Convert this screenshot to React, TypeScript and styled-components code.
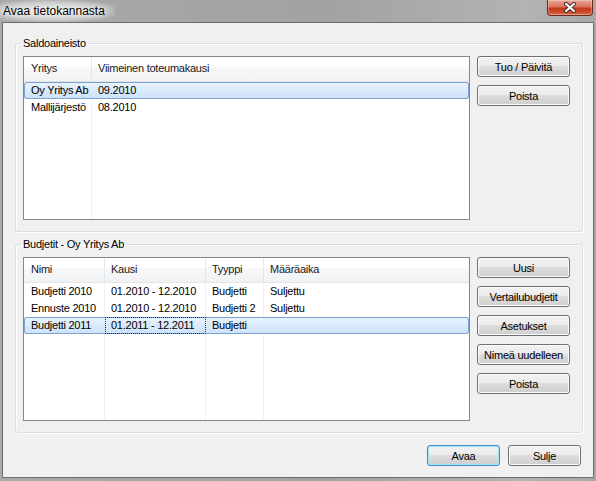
import React from 'react';
import styled, { createGlobalStyle } from 'styled-components';

const GlobalStyle = createGlobalStyle`
  html, body {
    margin: 0;
    padding: 0;
  }
  body {
    font-family: "Liberation Sans", Arial, sans-serif;
    font-size: 11px;
    font-weight: 400;
    letter-spacing: -0.25px;
    color: #000;
  }
`;

const Window = styled.div`
  width: 596px;
  height: 481px;
  display: flex;
  flex-direction: column;
  background: linear-gradient(to right, #a9a9a9 0%, #a2a2a2 55%, #b3b3b3 88%, #a8a8a8 100%);
`;

const TitleBar = styled.div`
  height: 22px;
  flex: none;
  display: flex;
  justify-content: space-between;
  align-items: flex-start;
`;

const Title = styled.span`
  padding: 0 10px 0 3px;
  line-height: 22px;
  font-size: 12px;
  letter-spacing: 0;
  color: #000;
  background: radial-gradient(ellipse at 45% 50%, rgba(255, 255, 255, 0.8) 0%, rgba(255, 255, 255, 0.4) 55%, rgba(255, 255, 255, 0) 80%);
  text-shadow: 0 0 4px #fff, 0 0 8px #fff;
`;

const CloseButton = styled.div`
  width: 46px;
  height: 16px;
  margin-right: 3px;
  box-sizing: border-box;
  border: 1px solid #6e2a1c;
  border-top: none;
  border-radius: 0 0 4px 4px;
  background: linear-gradient(#e9a796 0%, #d9735b 45%, #c4391c 55%, #cf4e2f 85%, #e0795a 100%);
  box-shadow: inset 0 0 0 1px rgba(255, 255, 255, 0.3);
  display: flex;
  align-items: center;
  justify-content: center;
`;

const Client = styled.div`
  flex: 1;
  margin: 0 2px 3px 2px;
  border: 1px solid #6d6d6d;
  background: #f0f0f0;
  padding: 14px 10px 11px 12px;
  display: flex;
  flex-direction: column;
`;

const Group = styled.fieldset`
  margin: 0;
  min-width: 0;
  padding: 6px 12px 11px 7px;
  border: 1px solid #d5dfe5;
  border-radius: 3px;
  box-shadow: 1px 1px 0 #fff, inset 1px 1px 0 #fff;

  & + & {
    margin-top: 6px;
  }
`;

const Legend = styled.legend`
  padding: 0 2px;
  margin-left: -2px;
  line-height: 13px;
  font-size: 11px;
  font-weight: 400;
`;

const GroupBody = styled.div`
  display: flex;
  gap: 7px;
`;

const List = styled.div`
  width: 447px;
  height: 164px;
  box-sizing: border-box;
  border: 1px solid #828790;
  background: #fff;
  display: flex;
  flex-direction: column;
  overflow: hidden;
`;

const Header = styled.div<{ $cols: string }>`
  display: grid;
  grid-template-columns: ${(p) => p.$cols};
  height: 25px;
  box-sizing: border-box;
  border-bottom: 1px solid #e5e5e5;
  background: linear-gradient(#ffffff 0%, #ffffff 40%, #f7f8fa 41%, #f1f2f4 100%);
  flex: none;
`;

const HeaderCell = styled.div`
  padding-left: 6px;
  line-height: 23px;
  color: #1a1a1a;
  border-right: 1px solid #e3e8ee;
  white-space: nowrap;
  overflow: hidden;

  &:first-child {
    padding-left: 7px;
  }
  &:last-child {
    border-right: none;
  }
`;

const Body = styled.div`
  flex: 1;
  display: flex;
  flex-direction: column;
`;

const Row = styled.div<{ $cols: string; $selected?: boolean }>`
  display: grid;
  grid-template-columns: ${(p) => p.$cols};
  height: 17px;
  border-radius: 3px;
  background: ${(p) => (p.$selected ? 'linear-gradient(#eaf3fd, #cbe1fb)' : 'transparent')};
  box-shadow: ${(p) => (p.$selected ? 'inset 0 0 0 1px #7da2ce' : 'none')};
`;

const Filler = styled.div<{ $cols: string }>`
  flex: 1;
  display: grid;
  grid-template-columns: ${(p) => p.$cols};
`;

const Cell = styled.div<{ $focus?: boolean; $line?: boolean }>`
  padding-left: 6px;
  line-height: 17px;
  white-space: nowrap;
  overflow: hidden;
  border-right: 1px solid ${(p) => (p.$line ? '#edf2f9' : 'transparent')};
  outline: ${(p) => (p.$focus ? '1px dotted #333' : 'none')};
  outline-offset: -1px;

  &:first-child {
    padding-left: 7px;
  }
  &:last-child {
    border-right: none;
  }
`;

const ButtonColumn = styled.div`
  display: flex;
  flex-direction: column;
  gap: 8px;
`;

const Button = styled.button<{ $width: number; $default?: boolean }>`
  width: ${(p) => p.$width}px;
  height: 21px;
  padding: 0;
  box-sizing: border-box;
  font-family: inherit;
  font-size: 11px;
  font-weight: 400;
  letter-spacing: inherit;
  color: #000;
  border: 1px solid ${(p) => (p.$default ? '#3c8fd0' : '#707070')};
  border-radius: 3px;
  background: linear-gradient(#f2f2f2 0%, #ebebeb 49%, #dddddd 50%, #cfcfcf 100%);
  box-shadow: inset 0 0 0 1px ${(p) => (p.$default ? '#9fe2fb' : '#fcfcfc')};
`;

const Footer = styled.div`
  margin-top: 12px;
  padding-right: 2px;
  display: flex;
  justify-content: flex-end;
  gap: 8px;
`;

interface ListViewProps {
  columns: string[];
  widths: string;
  rows: string[][];
  selected?: number;
  focusCell?: number;
}

const ListView = ({ columns, widths, rows, selected, focusCell }: ListViewProps) => (
  <List>
    <Header $cols={widths}>
      {columns.map((c) => (
        <HeaderCell key={c}>{c}</HeaderCell>
      ))}
    </Header>
    <Body>
      {rows.map((r, i) => (
        <Row key={i} $cols={widths} $selected={i === selected}>
          {r.map((v, j) => (
            <Cell key={j} $line={i !== selected} $focus={i === selected && j === focusCell}>
              {v}
            </Cell>
          ))}
        </Row>
      ))}
      <Filler $cols={widths}>
        {columns.map((c) => (
          <Cell key={c} $line />
        ))}
      </Filler>
    </Body>
  </List>
);

const CloseIcon = () => (
  <svg width="14" height="11" viewBox="0 0 14 11">
    <path d="M3 2 L11 9 M11 2 L3 9" stroke="#4a2e2a" strokeWidth="4.2" strokeLinecap="round" fill="none" />
    <path d="M3 2 L11 9 M11 2 L3 9" stroke="#fff" strokeWidth="2.2" strokeLinecap="round" fill="none" />
  </svg>
);

const saldoRows = [
  ['Oy Yritys Ab', '09.2010'],
  ['Mallijärjestö', '08.2010'],
];

const budgetRows = [
  ['Budjetti 2010', '01.2010 - 12.2010', 'Budjetti', 'Suljettu'],
  ['Ennuste 2010', '01.2010 - 12.2010', 'Budjetti 2', 'Suljettu'],
  ['Budjetti 2011', '01.2011 - 12.2011', 'Budjetti', ''],
];

const budgetButtons = ['Uusi', 'Vertailubudjetit', 'Asetukset', 'Nimeä uudelleen', 'Poista'];

export default function App() {
  return (
    <>
      <GlobalStyle />
      <Window>
        <TitleBar>
          <Title>Avaa tietokannasta</Title>
          <CloseButton>
            <CloseIcon />
          </CloseButton>
        </TitleBar>
        <Client>
          <Group>
            <Legend>Saldoaineisto</Legend>
            <GroupBody>
              <ListView
                columns={['Yritys', 'Viimeinen toteumakausi']}
                widths="68px 1fr"
                rows={saldoRows}
                selected={0}
              />
              <ButtonColumn>
                <Button $width={93}>Tuo / Päivitä</Button>
                <Button $width={93}>Poista</Button>
              </ButtonColumn>
            </GroupBody>
          </Group>
          <Group>
            <Legend>Budjetit - Oy Yritys Ab</Legend>
            <GroupBody>
              <ListView
                columns={['Nimi', 'Kausi', 'Tyyppi', 'Määräaika']}
                widths="81px 101px 58px 1fr"
                rows={budgetRows}
                selected={2}
                focusCell={1}
              />
              <ButtonColumn>
                {budgetButtons.map((b) => (
                  <Button key={b} $width={93}>
                    {b}
                  </Button>
                ))}
              </ButtonColumn>
            </GroupBody>
          </Group>
          <Footer>
            <Button $width={73} $default>
              Avaa
            </Button>
            <Button $width={73}>Sulje</Button>
          </Footer>
        </Client>
      </Window>
    </>
  );
}
